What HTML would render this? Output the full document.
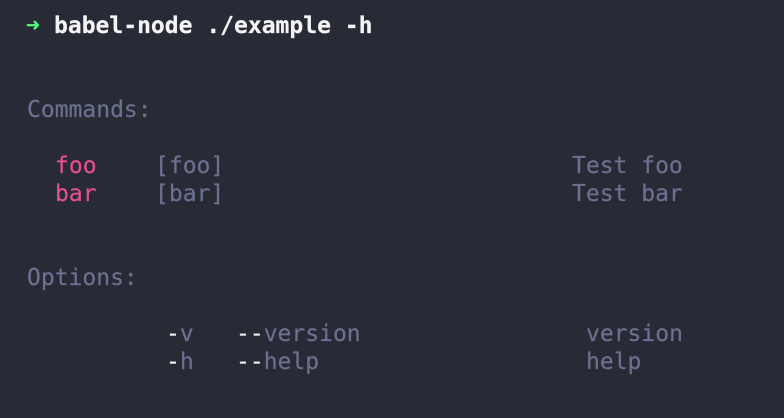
<!DOCTYPE html>
<html><head><meta charset="utf-8"><style>
html,body{margin:0;padding:0}
body{width:784px;height:418px;background:#282a36;overflow:hidden;position:relative;font-family:"DejaVu Sans Mono","Liberation Mono",monospace;font-size:23px;color:#6b7190;-webkit-text-stroke:0.2px}
span{position:absolute;line-height:28px;white-space:pre}
.w{color:#f4f4f4}.p{color:#e2508f}.g{color:#50fa7b}
</style></head><body>
<span class="g" style="left:26px;top:12px;font-weight:bold">➜</span>
<span class="w" style="left:54px;top:12px;font-weight:bold">babel-node ./example -h</span>
<span style="left:27px;top:96px">Commands:</span>
<span class="p" style="left:55px;top:152px">foo</span>
<span style="left:155px;top:152px">[foo]</span>
<span style="left:572px;top:152px">Test foo</span>
<span class="p" style="left:55px;top:180px">bar</span>
<span style="left:155px;top:180px">[bar]</span>
<span style="left:572px;top:180px">Test bar</span>
<span style="left:27px;top:264px">Options:</span>
<span style="left:166px;top:320px"><b class="w" style="font-weight:normal">-</b>v</span>
<span style="left:236px;top:320px"><b class="w" style="font-weight:normal">--</b>version</span>
<span style="left:586px;top:320px">version</span>
<span style="left:166px;top:348px"><b class="w" style="font-weight:normal">-</b>h</span>
<span style="left:236px;top:348px"><b class="w" style="font-weight:normal">--</b>help</span>
<span style="left:586px;top:348px">help</span>
</body></html>
